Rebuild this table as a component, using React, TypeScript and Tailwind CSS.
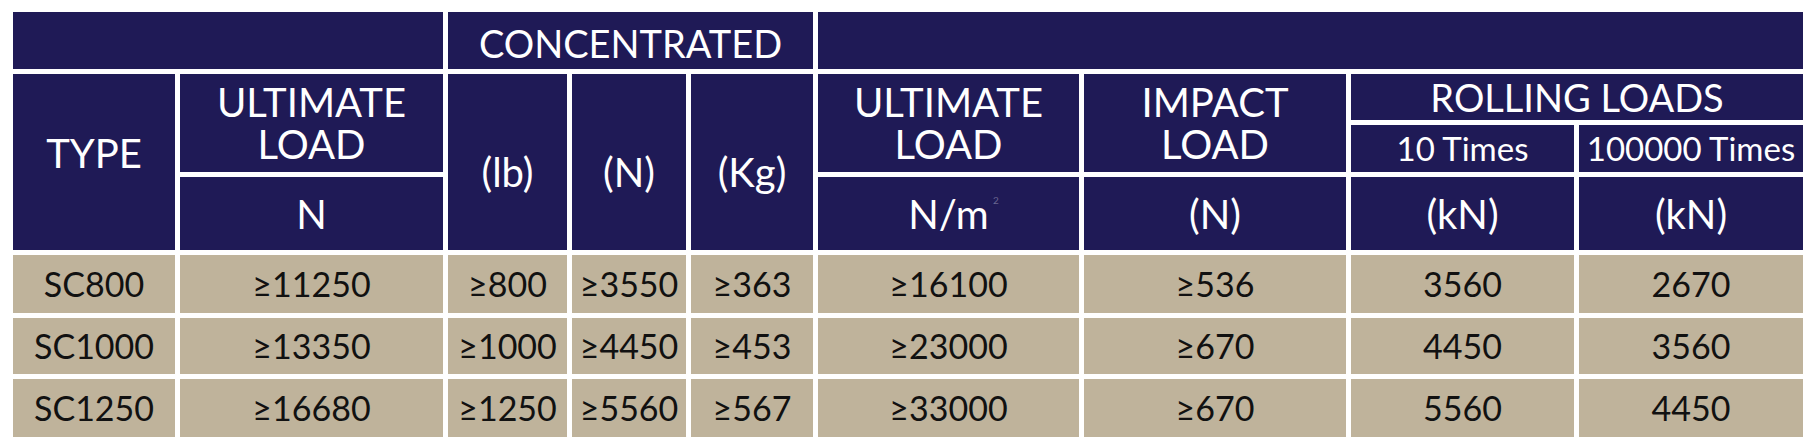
import React from "react";

const navy = "bg-[#1f1a56] text-white";
const tan = "bg-[#bfb39b] text-[#111] text-[34px]";

const rows = [
  ["SC800", "≥11250", "≥800", "≥3550", "≥363", "≥16100", "≥536", "3560", "2670"],
  ["SC1000", "≥13350", "≥1000", "≥4450", "≥453", "≥23000", "≥670", "4450", "3560"],
  ["SC1250", "≥16680", "≥1250", "≥5560", "≥567", "≥33000", "≥670", "5560", "4450"],
];

const Cell = ({
  className = "",
  children,
}: {
  className?: string;
  children?: React.ReactNode;
}) => (
  <div className={`flex items-center justify-center text-center ${className}`}>
    {children}
  </div>
);

export default function App() {
  return (
    <div
      className="bg-white w-[1808px] h-[444px] pl-[13px] pt-[12px]"
      style={{ fontFamily: "Lato, 'Open Sans', sans-serif" }}
    >
      <div className="grid grid-cols-[162px_263px_119px_114px_122px_261px_262px_223px_224px] grid-rows-[57px_46px_47px_73px_58px_56px_58px] gap-[5px] text-[40px] leading-[1.05]">
        {/* top band */}
        <Cell className={`${navy} col-start-1 col-span-2 row-start-1`} />
        <Cell className={`${navy} col-start-3 col-span-3 row-start-1 pt-[6px] text-[38px]`}>
          CONCENTRATED
        </Cell>
        <Cell className={`${navy} col-start-6 col-span-4 row-start-1`} />

        {/* second header block */}
        <Cell className={`${navy} col-start-1 row-start-2 row-span-3 pb-[18px]`}>TYPE</Cell>
        <Cell className={`${navy} col-start-2 row-start-2 row-span-2 flex-col`}>
          <span>ULTIMATE</span>
          <span>LOAD</span>
        </Cell>
        <Cell className={`${navy} col-start-2 row-start-4`}>N</Cell>
        <Cell className={`${navy} col-start-3 row-start-2 row-span-3 pt-[20px]`}>(lb)</Cell>
        <Cell className={`${navy} col-start-4 row-start-2 row-span-3 pt-[20px]`}>(N)</Cell>
        <Cell className={`${navy} col-start-5 row-start-2 row-span-3 pt-[20px]`}>(Kg)</Cell>
        <Cell className={`${navy} col-start-6 row-start-2 row-span-2 flex-col`}>
          <span>ULTIMATE</span>
          <span>LOAD</span>
        </Cell>
        <Cell className={`${navy} col-start-6 row-start-4`}>
          <span className="relative">
            N/m
            <span className="absolute -right-[10px] top-[2px] text-[10px] leading-none text-[#6a6690]">
              2
            </span>
          </span>
        </Cell>
        <Cell className={`${navy} col-start-7 row-start-2 row-span-2 flex-col`}>
          <span>IMPACT</span>
          <span>LOAD</span>
        </Cell>
        <Cell className={`${navy} col-start-7 row-start-4`}>(N)</Cell>
        <Cell className={`${navy} col-start-8 col-span-2 row-start-2 text-[38px] pt-[2px]`}>
          ROLLING LOADS
        </Cell>
        <Cell className={`${navy} col-start-8 row-start-3 text-[33px]`}>10 Times</Cell>
        <Cell className={`${navy} col-start-9 row-start-3 text-[33px]`}>100000 Times</Cell>
        <Cell className={`${navy} col-start-8 row-start-4`}>(kN)</Cell>
        <Cell className={`${navy} col-start-9 row-start-4`}>(kN)</Cell>

        {/* data */}
        {rows.map((r, i) =>
          r.map((v, j) => (
            <Cell key={`${i}-${j}`} className={tan}>
              {v}
            </Cell>
          ))
        )}
      </div>
    </div>
  );
}
